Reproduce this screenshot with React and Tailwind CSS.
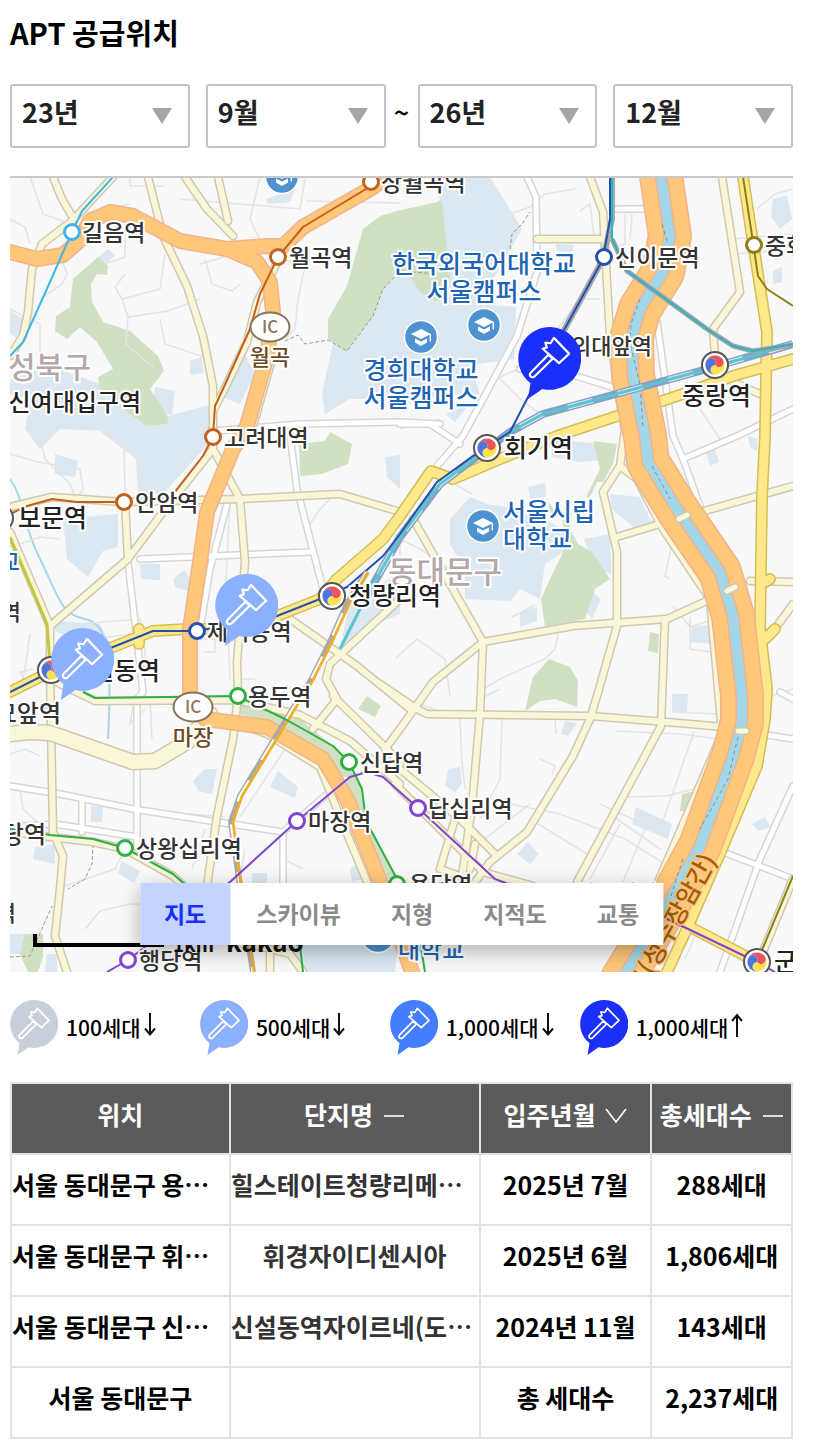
import React from "react";

const FONT = "font-['Noto_Sans_CJK_KR','Noto_Sans',sans-serif]";

/* ---------- icons ---------- */

function HammerShape({ fill }) {
  return (
    <>
      <path d="M24 0a24 24 0 1 1-5.5 47.3L7.5 55l2-12A24 24 0 0 1 24 0z" fill={fill} />
      <g fill="none" stroke="#fff" strokeWidth="1.7" strokeLinejoin="round" strokeLinecap="round">
        <path d="M27.4 8.3 39 20.4 31.3 27.6 18.8 16.6 22 15.6 20.8 12 24.8 12.4z" />
        <path d="M23.2 21.2 9.6 34.9a2 2 0 0 0 0 2.9 2 2 0 0 0 2.9 0L26.4 24.2z" />
      </g>
    </>
  );
}

function HammerIcon({ fill }) {
  return (
    <svg viewBox="0 0 48 55" className="w-12 shrink-0" aria-hidden="true">
      <HammerShape fill={fill} />
    </svg>
  );
}

function ArrowIcon({ up }) {
  return (
    <svg
      viewBox="0 0 12 24"
      className="ml-[3px] w-3 shrink-0"
      fill="none"
      stroke="#111"
      strokeWidth="2"
      role="img"
      aria-label={up ? "이상" : "이하"}
    >
      {up ? <path d="M6 24V2M1 8 6 2 11 8" /> : <path d="M6 0V21M1 15.500 6 21.500 11 15.500" />}
    </svg>
  );
}

/* ---------- map ---------- */

const CAMPUS = [
  "430,178 490,178 522,230 505,260 478,305 516,308 514,360 470,366 480,395 395,400 350,400 325,415 322,395 334,340 347,352 373,317 383,290 400,240 440,200",
  "120,430 213,405 213,440 163,495 138,495 136,460 100,432",
  "63,520 118,515 118,548 103,552 88,578 67,560",
  "10,380 45,365 100,385 125,410 150,430 200,412 213,420 180,460 130,450 105,432 60,430 40,450 25,430 30,400 10,395",
  "10,312 24,320 18,340 10,335",
  "97,259 108,250 115,256 106,266",
  "190,362 202,358 203,374 190,376",
  "155,388 175,392 172,416 152,410",
  "245,355 255,375 240,405 222,398",
  "266,200 295,190 290,203 268,205",
  "470,498 487,505 520,510 545,520 570,535 568,550 545,565 540,600 520,590 510,602 465,600 465,570 450,545 450,520",
  "528,488 545,484 546,498 530,500",
  "550,440 600,445 612,460 580,463 552,458",
  "584,540 610,535 611,575 595,570",
  "588,590 601,600 592,620 580,605",
  "520,613 537,608 537,622 520,628",
  "610,495 640,498 650,520 665,525 640,535 630,525 612,510",
  "692,628 713,625 713,645 690,643",
  "706,452 714,448 719,463 710,467",
  "748,437 757,440 757,452 750,448",
  "773,200 787,197 792,220 780,230 771,218",
  "773,272 782,268 782,283 773,285",
  "556,245 574,246 573,255 557,252",
  "445,415 470,405 455,423",
  "193,782 205,770 217,770 212,795 198,792",
  "278,772 298,788 295,799 270,788",
  "91,807 103,808 102,823 91,823",
  "35,848 55,845 55,865 33,860",
  "122,862 140,872 134,884 118,874",
  "55,455 78,462 75,478 55,475",
  "140,565 160,565 160,581 141,580",
  "173,580 184,571 190,580 188,592 175,588",
  "385,458 400,456 400,490 387,478",
  "350,600 400,575 400,615 365,630 340,650",
  "55,622 100,625 108,640 95,648 55,632",
  "448,770 460,768 462,785 455,793 445,787",
  "528,843 539,855 530,865 517,855",
  "636,808 672,825 668,840 632,825",
  "672,695 688,695 687,714 672,712",
  "752,825 765,818 770,828 758,832",
  "565,722 577,724 568,737 561,735",
  "252,874 267,874 267,890 252,890",
  "350,870 360,862 366,880 352,882",
  "275,930 400,930 395,973 305,973",
  "10,935 32,935 30,955 10,955",
  "47,955 57,955 57,973 45,973",
];

const PARKS = [
  "98,258 108,267 107,276 97,275 91,285 92,303 103,323 130,332 158,357 164,372 150,390 168,417 167,425 147,427 127,413 123,403 100,392 98,378 113,370 97,343 80,328 67,340 55,332 56,317 70,308 73,280",
  "397,212 442,202 450,280 437,303 420,293 408,275 397,273 383,290 373,317 353,343 347,352 328,340 328,320 347,287 363,230 380,217",
  "299,445 325,442 330,433 352,445 348,465 322,475 300,477",
  "593,442 617,445 613,465 603,483 597,483 590,498 586,498 600,470",
  "548,502 560,520 572,510 570,530 578,545 592,553 610,580 595,590 585,620 545,628 541,600 550,580 567,545 562,520 550,515",
  "549,660 570,668 578,682 577,708 555,700 540,702 525,712 530,690 533,678",
  "650,633 659,635 658,654 648,652",
  "682,795 695,792 688,812 680,812",
  "367,697 381,707 375,718 358,710",
  "25,935 43,935 43,958 38,973 28,973 20,955",
  "238,703 290,712 333,747 348,763 362,790 366,822 397,880 380,880 345,792 323,757 267,722 238,715",
];

const LANES = [
  "M10 220L25 228 30 245M10 310L40 325 40 360 70 370M30 178L43 215 70 225M85 214L130 205M130 178V187H165",
  "M58 250L67 275 62 285 40 300M105 265L125 258 125 235 150 225M125 275L115 288 122 300 160 290 165 255",
  "M122 300L128 318 168 312 200 300M128 318L126 345 155 370M160 320L165 345 210 360M200 265L250 250 305 267 298 300 295 330 285 340",
  "M205 260L212 285 232 292 240 285M180 200L300 210 305 180M260 178L250 220 262 245M307 202L400 204",
  "M10 455L38 463 80 470 83 490 75 502M38 430L45 460 70 485 77 502M124 448L125 495M10 548L40 538 60 540",
  "M80 625L140 620 145 650 145 697M95 640L200 625M30 635L25 670 20 690M195 640L215 640 215 653 203 653",
  "M230 500L226 580 230 680M310 525L320 510 330 500M240 680L255 680",
  "M10 755L25 750 40 757M20 790L23 810 45 830M80 810V835M190 815L225 818M285 750L240 818",
  "M65 887L115 870 125 850M85 930L100 912 130 905 140 905M135 697L130 725 145 710M150 700L152 740",
  "M192 870L205 830M240 880L245 850M285 830L283 860 303 870",
  "M400 600L400 540 420 550 450 570M455 485L472 495M420 705L460 720 462 765 465 790M502 720L500 780 490 800 480 820",
  "M483 690L500 680 533 665 545 660 555 650 558 635M512 618L535 606M555 720L556 735M485 840L510 820 530 805M510 805L560 815 625 840 665 865",
  "M535 823L587 855M540 760L555 767 552 775M625 798L665 797 695 790M620 825L590 880M645 830L620 890M600 805L665 835M615 732L680 735 720 740M694 733L660 830M610 815L660 850",
  "M670 580L665 577 673 540M690 618L690 650 712 653M690 628L715 620M672 713L720 715M770 697L793 690M695 937L685 960M673 607L690 628",
  "M498 378L510 390 520 400 540 415M560 350L550 340 580 300 600 300M575 375L620 385M510 215L530 208 545 195 575 190M580 212L590 205 595 245",
  "M617 248L625 245 625 215M632 215L630 240M730 240L793 235M735 255L793 250M757 210L775 195 793 190M700 410L720 440M740 437L793 412",
  "M500 378L530 365M400 430L440 420M30 690L20 673 33 670M480 700L500 690M395 660L417 640 445 660 450 697",
];

const WHITE_ROADS = [
  "M527 178L536 198 537 273 517 337 463 437 437 467",
  "M213 432L300 425 397 423",
  "M290 437L297 490 323 590",
  "M140 560L310 553",
  "M227 505L210 570 200 630",
  "M128 563L143 693 137 700V850",
  "M10 787L60 795 133 810 283 833 345 780",
  "M82 800V833M10 828L55 825 137 838",
  "M723 853L793 880M793 787L760 860 720 973",
  "M657 323L673 437 683 460 700 507",
  "M683 460L737 437 793 410",
  "M617 210H645M400 425L430 425 460 445",
  "M780 693L793 700M793 740L747 733M283 833V883",
  "M520 370L560 372 650 400M400 423L440 425",
];

const PALE_ROADS = [
  "M53 178L62 200 72 217",
  "M113 178L72 222 42 245 32 270 28 313 23 337 10 357",
  "M148 178L163 237 187 287 203 337 213 387 213 450 163 513 128 560 50 627",
  "M185 178L207 210 233 237M218 178L228 222",
  "M278 262L257 303 247 343 223 393 214 410",
  "M272 360L253 427",
  "M213 450L240 500 245 563 237 663 238 697 233 740 217 817 207 887",
  "M10 508L52 498 123 503 240 500 340 495 397 512",
  "M125 503L128 560",
  "M10 533L50 627V673L53 833 63 857 60 890 55 937 67 973",
  "M290 620L357 667 410 710",
  "M400 600L330 665 326 680 337 700 313 730M333 697L387 750 400 765",
  "M50 680L95 702 237 701 300 716 350 742 400 785",
  "M235 723L267 735 320 768 345 830 370 890",
  "M10 833L50 838 93 843 125 850 173 877 187 890",
  "M413 520L483 643 480 715 472 807 462 877",
  "M483 643L573 627 667 620 733 590M750 582L793 583",
  "M625 430L620 467 603 493 617 553 617 627 597 697 590 720 573 757 527 833 490 863 470 890",
  "M620 467L637 480 663 530 710 600 722 735 655 890",
  "M617 538L683 518 793 487",
  "M665 620L661 727 577 883",
  "M483 643L433 683 400 730 385 750",
  "M380 685L417 710 427 715 590 717 667 723 747 730",
  "M385 765L400 770 460 820 497 857M395 785L440 830 483 873 533 887",
  "M455 820L440 870 460 877M475 845L470 870",
  "M590 178L603 213 610 337 620 403 626 437",
  "M537 240H600",
  "M722 178L740 293 713 330 715 357",
  "M793 605L770 637",
  "M760 960L793 880M733 383L760 395",
  "M250 945L290 955 303 973M270 950V973",
];

const WIDE_PALE = ["M10 735L30 733 50 734 133 763 155 762 187 743 210 715"];

const YELLOW_ROADS = [
  "M10 693L50 673 113 648 153 632 187 630 220 630 277 617 320 600 337 580 383 540 400 517 431 472 453 480 500 460 557 437 617 417 677 397 733 377 793 360",
  "M743 178L752 237 767 333 765 437 762 497 760 630 767 690 765 720 757 767 722 850 690 923 667 973",
  "M690 928L757 963",
  "M765 640L775 630M765 583L770 580M139 630V645",
];

const HIGHWAYS = [
  "M10 253L37 260 63 256 80 241 90 222 110 213 133 217 180 242 227 250 267 247 283 247 303 228 370 190 385 180",
  "M227 250L257 263 270 283 273 313 267 357 247 427 233 450 207 513 200 563 190 630 190 697 205 720 267 728 323 760 347 800 383 890 412 973",
];

const RIVERSIDE =
  "M660 170L670 237 663 273 640 310 632 337 633 377 645 437 648 463 677 510 720 573 733 617 742 697 742 723 733 757 700 847 667 907 622 980";

const RAILWAY = "M793 345L700 372 627 392 543 415 510 433 440 485 400 538 365 600";
const GYEONGUI = "M367 573L348 603 330 643 310 683 297 703 240 797 231 823 240 887 253 973";

function Roads({ paths, width, fill, edge }) {
  return (
    <g fill="none" strokeLinejoin="round" strokeLinecap="round">
      {paths.map((d) => (
        <path key={"e" + d} d={d} stroke={edge} strokeWidth={width + 3} />
      ))}
      {paths.map((d) => (
        <path key={"f" + d} d={d} stroke={fill} strokeWidth={width} />
      ))}
    </g>
  );
}

const STATIONS = [
  [72, 233, "#41b6e6", "길음역", 82],
  [371, 183, "#c4601f", "상월곡역", 381],
  [278, 258, "#c4601f", "월곡역", 289],
  [213, 438, "#c4601f", "고려대역", 224],
  [124, 503, "#c4601f", "안암역", 135],
  [604, 258, "#2450b0", "신이문역", 615],
  [197, 632, "#2450b0", "제기동역", 207],
  [754, 246, "#8a8015", "중화역", 765],
  [238, 697, "#2fae43", "용두역", 248],
  [349, 763, "#2fae43", "신답역", 360],
  [397, 885, "#2fae43", "용답역", 409],
  [125, 849, "#2fae43", "상왕십리역", 136],
  [297, 822, "#8244cf", "마장역", 308],
  [418, 809, "#8244cf", "답십리역", 428],
  [128, 961, "#8244cf", "행당역", 139],
];

const HUBS = [
  [487, 449],
  [332, 597],
  [715, 366],
  [51, 671],
  [757, 963],
  [0, 519],
];

const SCHOOLS = [
  [282, 178],
  [484, 326],
  [421, 338],
  [483, 527],
  [378, 937],
];

function Hub({ x, y }) {
  const comma = "M0 0A4.8 4.8 0 0 0-8.3-4.8A9.6 9.6 0 0 1 8.3-4.8A4.8 4.8 0 0 1 0 0z";
  return (
    <g transform={`translate(${x} ${y})`}>
      <circle r="13" fill="#fff" stroke="#555" strokeWidth="2" />
      <path d={comma} fill="#f0525a" />
      <path d={comma} fill="#ffe14d" transform="rotate(120)" />
      <path d={comma} fill="#4f74e0" transform="rotate(240)" />
    </g>
  );
}

function School({ x, y }) {
  return (
    <g transform={`translate(${x} ${y})`}>
      <circle r="16.5" fill="#4f92d2" stroke="#fff" strokeWidth="1.5" />
      <path d="M0-8 10-3 0 2-10-3zM-6 1.500 0 4.500 6 1.500V5.500L0 9-6 5.500z" fill="#fff" />
      <path d="M9.300-3V4.500" stroke="#fff" strokeWidth="1.5" />
    </g>
  );
}

function Interchange({ x, y }) {
  return (
    <g transform={`translate(${x} ${y})`}>
      <ellipse rx="19.5" ry="14.5" fill="#fff" stroke="#87765f" strokeWidth="2" />
      <text textAnchor="middle" y="6" fontSize="17" fontWeight="500" fill="#8b7355" stroke="none">
        IC
      </text>
    </g>
  );
}

function Label({ x, y, size = 23, fill = "#333", anchor = "start", children }) {
  return (
    <text
      x={x}
      y={y}
      fontSize={size}
      fontWeight="500"
      textAnchor={anchor}
      fill={fill}
      stroke="#fff"
      strokeWidth="4"
      strokeLinejoin="round"
      paintOrder="stroke"
    >
      {children}
    </text>
  );
}

function Marker({ x, y, fill }) {
  return (
    <svg x={x} y={y} width="63" height="72" viewBox="0 0 48 55">
      <HammerShape fill={fill} />
    </svg>
  );
}

function SupplyMap() {
  const blue = "#1e64b4";
  return (
    <svg
      viewBox="10 179 783 794"
      className={`block w-full ${FONT}`}
      role="img"
      aria-label="서울 동대문구 지도"
    >
      <rect x="10" y="179" width="783" height="794" fill="#f8f8f8" />
      <g fill="#dbe7f1">
        {CAMPUS.map((p) => (
          <polygon key={p} points={p} />
        ))}
      </g>
      <g fill="#d0e1c3">
        {PARKS.map((p) => (
          <polygon key={p} points={p} />
        ))}
      </g>
      <path d="M10 480C25 500 20 520 40 560S60 615 85 620 112 660 108 740" fill="none" stroke="#a5d8e8" strokeWidth="2" />
      <g fill="none" stroke="#e4e4e4" strokeWidth="1.6">
        {LANES.map((d) => (
          <path key={d} d={d} />
        ))}
      </g>
      <g fill="none" stroke="#a39b8c" strokeWidth="1" strokeDasharray="4 2">
        <path d="M285 342L298 336 305 345 328 341 347 352 373 317 383 290 400 272 437 275" />
        <path d="M510 250L512 235 522 225 530 213M93 845L92 865 85 880 68 890M10 958L30 957 52 907" />
      </g>
      <Roads paths={WHITE_ROADS} width={5} fill="#ffffff" edge="#d6d6d6" />
      <Roads paths={PALE_ROADS} width={6} fill="#faf6d8" edge="#cfc9b2" />
      <Roads paths={WIDE_PALE} width={14} fill="#faf6d8" edge="#cfc9b2" />
      <Roads paths={YELLOW_ROADS} width={9} fill="#ffe88a" edge="#d3bd55" />
      <Roads paths={HIGHWAYS} width={13} fill="#ffc77a" edge="#f2b38a" />
      <Roads paths={[RIVERSIDE]} width={41} fill="#ffc77a" edge="#f2b38a" />
      <Roads paths={[RIVERSIDE]} width={10} fill="#a2d7ea" edge="#f2b38a" />
      <Roads paths={["M679 520L687 516M727 592L735 588M738 732H746"]} width={5} fill="#faf6d8" edge="#cfc9b2" />
      <path
        d="M662 225L668 245M640 300L631 325 630 345 640 385 643 430M652 467L670 500M738 738L728 780 700 830M683 860L670 900"
        fill="none"
        stroke="#8f8f86"
        strokeWidth="1"
        strokeDasharray="4 3"
      />

      <g fill="none" strokeLinejoin="round">
        <path d="M371 187L303 228 278 258 260 295 250 330 223 390 215 407 213 437 203 457 175 493" stroke="#c4601f" strokeWidth="2" />
        <path d="M124 503H77L52 500 27 507 10 515" stroke="#c4601f" strokeWidth="2" />
        <path d="M113 178L82 212 72 233 50 283 23 343 10 357" stroke="#41b6e6" strokeWidth="2" />
        <path d="M563 333L603 260 612 220V178" stroke="#a8a8a8" strokeWidth="6" />
        <path d={RAILWAY} stroke="#8a9fc4" strokeWidth="8" />
        <path d={RAILWAY} stroke="#dfe8f2" strokeWidth="5" strokeDasharray="26 26" />
        <path d={RAILWAY + " 340 650"} stroke="#58c5cf" strokeWidth="3" />
        <path d="M612 240L627 272 707 330 733 347 753 352 793 346" stroke="#a4a4a4" strokeWidth="5" />
        <path d="M612 178V240L627 272 707 330 733 347 753 352 793 345" stroke="#27b5c5" strokeWidth="2" />
        <path
          d="M10 693L50 673 113 648 153 632 197 632 277 617 320 600 347 588 383 557 400 535 437 483 483 450 510 433 527 400 563 333 603 260 610 220V178"
          stroke="#2450b0"
          strokeWidth="2"
        />
        <path d={GYEONGUI} stroke="#a9a9a9" strokeWidth="6" />
        <path d={GYEONGUI} stroke="#fff" strokeWidth="3" strokeDasharray="24 24" />
        <path d="M368 573L350 603 332 643 312 683 299 703 242 797 233 823 241 887 254 973" stroke="#f3ae20" strokeWidth="2.5" />
        <path d="M83 693L95 699 237 697 285 720 333 747 349 763 362 790 366 822 397 880 418 930 425 973" stroke="#2fae43" strokeWidth="2" />
        <path d="M10 830L50 836 93 840 125 849 173 875 187 887 300 947 303 973" stroke="#2fae43" strokeWidth="2" />
        <path
          d="M107 973L128 961 230 883 297 822 350 778 367 773 383 778 418 809 495 880 513 887 663 918 757 963 775 973"
          stroke="#8244cf"
          strokeWidth="2"
        />
        <path d="M743 178L753 243 758 277 767 290 793 307M793 877L757 963" stroke="#8a8015" strokeWidth="2" />
        <path d="M10 538L47 625 50 665" stroke="#c3c63c" strokeWidth="3" />
      </g>

      {SCHOOLS.map(([x, y]) => (
        <School key={x} x={x} y={y} />
      ))}
      {STATIONS.map(([x, y, color]) => (
        <circle key={x} cx={x} cy={y} r="7.5" fill="#fff" stroke={color} strokeWidth="3" />
      ))}
      {HUBS.map(([x, y]) => (
        <Hub key={x} x={x} y={y} />
      ))}
      <Interchange x={270} y={328} />
      <Interchange x={193} y={708} />

      <Label x={8} y={379} size={30} fill="#b5a8a8">성북구</Label>
      <Label x={388} y={584} size={31} fill="#b5a8a8">동대문구</Label>
      {STATIONS.map(([, y, , name, tx]) => (
        <Label key={name} x={tx} y={y + 9}>{name}</Label>
      ))}
      <Label x={571} y={355} size={22}>외대앞역</Label>
      <Label x={141} y={412} size={24} anchor="end" fill="#222">성신여대입구역</Label>
      <Label x={504} y={458} size={25} fill="#222">회기역</Label>
      <Label x={349} y={606} size={25} fill="#222">청량리역</Label>
      <Label x={682} y={406} size={25} fill="#222">중랑역</Label>
      <Label x={18} y={528} size={25} fill="#222">보문역</Label>
      <Label x={160} y={681} size={25} anchor="end" fill="#222">신설동역</Label>
      <Label x={61} y={723} size={24} anchor="end">동묘앞역</Label>
      <Label x={46} y={844} size={24} anchor="end">신당역</Label>
      <Label x={21} y={621} size={22} anchor="end">창신역</Label>
      <Label x={16} y={922} size={22} anchor="end">청구역</Label>
      <Label x={774} y={972} size={25} fill="#222">군자역</Label>
      <Label x={576} y={902} size={22}>장한평역</Label>
      <Label x={270} y={366} size={22} anchor="middle" fill="#6b4a1f">월곡</Label>
      <Label x={193} y={746} size={22} anchor="middle" fill="#6b4a1f">마장</Label>
      <Label x={484} y={274} size={25} anchor="middle" fill={blue}>한국외국어대학교</Label>
      <Label x={484} y={302} size={25} anchor="middle" fill={blue}>서울캠퍼스</Label>
      <Label x={421} y={380} size={25} anchor="middle" fill={blue}>경희대학교</Label>
      <Label x={421} y={408} size={25} anchor="middle" fill={blue}>서울캠퍼스</Label>
      <Label x={503} y={522} size={25} fill={blue}>서울시립</Label>
      <Label x={503} y={549} size={25} fill={blue}>대학교</Label>
      <Label x={20} y={571} size={23} anchor="end" fill={blue}>대학교</Label>
      <Label x={398} y={959} size={24} fill={blue}>대학교</Label>
      <text
        transform="translate(717 861) rotate(-61)"
        textAnchor="end"
        fontSize="25"
        fontWeight="500"
        fill="#a35c0c"
        stroke="#ffc77a"
        strokeWidth="3"
        paintOrder="stroke"
      >
        동부간선도로(성수장암간)
      </text>

      <path d="M35 935V946H164" fill="none" stroke="#000" strokeWidth="4" />
      <text x="173" y="953" fontSize="19" fontWeight="700" fill="#111">1km</text>
      <text x="226" y="953" fontSize="26" fontWeight="700" fill="#111">kakao</text>

      <Marker x={51} y={629} fill="#8bb0ff" />
      <Marker x={215} y={575} fill="#8bb0ff" />
      <Marker x={518} y={328} fill="#1b2ffb" />
    </svg>
  );
}

/* ---------- page ---------- */

function Picker({ label, value, options }) {
  return (
    <div className="relative min-w-0 flex-1">
      <select
        aria-label={label}
        defaultValue={value}
        className="block h-16 w-full appearance-none rounded-[3px] border-2 border-[#bfc3ce] bg-white pb-2 pl-2.5 pr-12 text-[27px] font-bold text-[#222]"
      >
        {options.map((o) => (
          <option key={o}>{o}</option>
        ))}
      </select>
      <svg viewBox="0 0 20 16" className="pointer-events-none absolute right-[18px] top-6 w-5" aria-hidden="true">
        <path d="M0 0h20L10 16z" fill="#a3a5a7" />
      </svg>
    </div>
  );
}

const YEARS = ["23년", "24년", "25년", "26년"];
const MONTHS = Array.from({ length: 12 }, (_, i) => `${i + 1}월`);
const MAP_TYPES = ["지도", "스카이뷰", "지형", "지적도", "교통"];

const LEGEND = [
  ["#c9cfda", "100세대", false],
  ["#8bb0ff", "500세대", false],
  ["#437eff", "1,000세대", false],
  ["#1b2ffb", "1,000세대", true],
];

const ROWS = [
  ["서울 동대문구 용두동", "힐스테이트청량리메트로블", "2025년 7월", "288세대"],
  ["서울 동대문구 휘경동", "휘경자이디센시아", "2025년 6월", "1,806세대"],
  ["서울 동대문구 신설동", "신설동역자이르네(도시형)", "2024년 11월", "143세대"],
];

function SortIcon({ sorted }) {
  return (
    <svg viewBox="0 0 22 16" className="w-[22px] shrink-0" fill="none" stroke="#fff" strokeWidth="1.6" aria-hidden="true">
      {sorted ? <path d="M1 2 11 15 21 2" /> : <path d="M1 9H21" />}
    </svg>
  );
}

const HEAD = "h-[71px] border-2 border-[#e2e2e2] bg-[#5b5b5b] p-0 pb-2 text-white";
const CELL = "h-[71px] overflow-hidden text-ellipsis whitespace-nowrap border-2 border-[#e2e2e2] p-0 pb-2.5 text-center";

function HeaderButton({ children, sorted }) {
  return (
    <button type="button" className="inline-flex items-center gap-2.5 whitespace-nowrap font-bold">
      {children}
      <SortIcon sorted={sorted} />
    </button>
  );
}

export default function App() {
  return (
    <main className={`bg-white pb-3 pl-2.5 pr-[34px] text-black ${FONT}`}>
      <h1 className="pt-3 text-[29px] font-bold leading-10">APT 공급위치</h1>

      <form className="mt-8 flex items-center">
        <div className="flex min-w-0 flex-1 gap-4">
          <Picker label="시작 연도" value="23년" options={YEARS} />
          <Picker label="시작 월" value="9월" options={MONTHS} />
        </div>
        <span className="w-8 shrink-0 pb-2 text-center text-[27px] font-medium leading-8">~</span>
        <div className="flex min-w-0 flex-1 gap-4">
          <Picker label="종료 연도" value="26년" options={YEARS} />
          <Picker label="종료 월" value="12월" options={MONTHS} />
        </div>
      </form>

      <section className="relative mt-7 border-t-2 border-[#c9c9c9]">
        <SupplyMap />
        <div className="absolute bottom-[27px] left-1/2 flex -translate-x-1/2 gap-[2px] bg-white shadow-[0_6px_20px_rgba(0,0,0,0.3)]">
          {MAP_TYPES.map((t, i) => (
            <button
              key={t}
              type="button"
              className={
                "h-[62px] whitespace-nowrap px-6 pb-0.5 text-[23px] font-bold " +
                (i === 0 ? "bg-[#c3d4ff] text-[#1b2ffb]" : "text-[#8a8a8a]")
              }
            >
              {t}
            </button>
          ))}
        </div>
      </section>

      <ul className="mt-7 grid w-[97%] grid-cols-4">
        {LEGEND.map(([color, text, up]) => (
          <li key={color} className="flex items-center whitespace-nowrap">
            <HammerIcon fill={color} />
            <span className="ml-2 text-[21px] font-medium">{text}</span>
            <span className="pb-1.5">
              <ArrowIcon up={up} />
            </span>
          </li>
        ))}
      </ul>

      <table className="mt-[27px] w-full table-fixed border-collapse text-[25px] font-bold">
        <thead>
          <tr>
            <th className={`w-[28%] ${HEAD}`}>위치</th>
            <th className={`w-[32%] ${HEAD}`}>
              <HeaderButton>단지명</HeaderButton>
            </th>
            <th className={`w-[22%] ${HEAD}`}>
              <HeaderButton sorted>입주년월</HeaderButton>
            </th>
            <th className={`w-[18%] ${HEAD}`}>
              <HeaderButton>총세대수</HeaderButton>
            </th>
          </tr>
        </thead>
        <tbody>
          {ROWS.map((r) => (
            <tr key={r[1]}>
              <td className={CELL}>{r[0]}</td>
              <td className={`text-[#333] ${CELL}`}>{r[1]}</td>
              <td className={CELL}>{r[2]}</td>
              <td className={CELL}>{r[3]}</td>
            </tr>
          ))}
          <tr>
            <td className={CELL}>서울 동대문구</td>
            <td className={CELL}></td>
            <td className={CELL}>총 세대수</td>
            <td className={CELL}>2,237세대</td>
          </tr>
        </tbody>
      </table>
    </main>
  );
}
